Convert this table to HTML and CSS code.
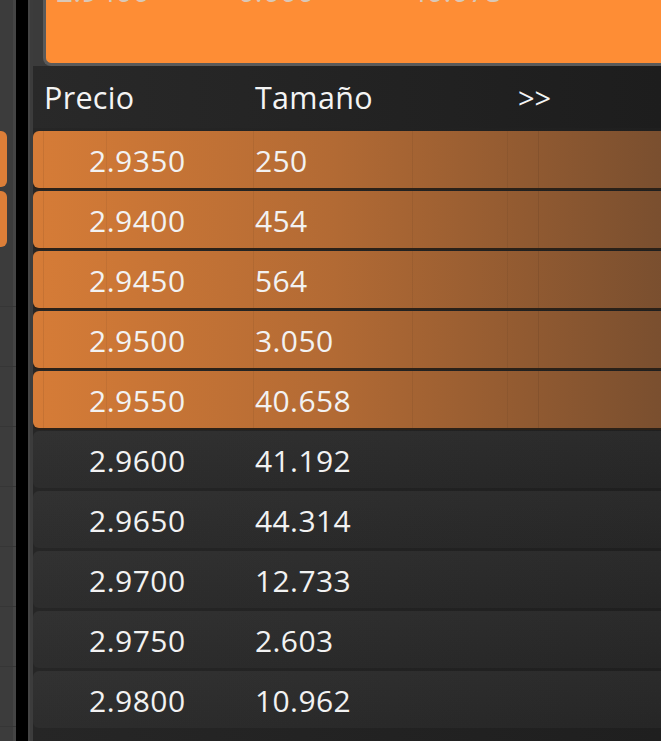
FILE: index.html
```html
<!DOCTYPE html>
<html lang="es">
<head>
<meta charset="utf-8">
<title>Libro de órdenes</title>
<link rel="stylesheet" href="styles.css">
</head>
<body>
<div class="app">
  <div class="side">
    <div class="side-list">
      <div class="side-row hot"></div>
      <div class="side-row hot"></div>
      <div class="side-row"></div>
      <div class="side-row"></div>
      <div class="side-row"></div>
      <div class="side-row"></div>
      <div class="side-row"></div>
      <div class="side-row"></div>
      <div class="side-row"></div>
      <div class="side-row"></div>
    </div>
  </div>
  <div class="rule"></div>
  <div class="main">
    <div class="top">
      <div class="card">
        <div class="card-vals"><span class="cv1">2.9400</span><span class="cv2">0.000</span><span class="cv3">40.075</span></div>
      </div>
    </div>
    <div class="head">
      <span class="h-price">Precio</span>
      <span class="h-size">Tamaño</span>
      <span class="h-more">&gt;&gt;</span>
    </div>
    <div class="book">
      <div class="row ask"><span class="price">2.9350</span><span class="size">250</span></div>
      <div class="row ask"><span class="price">2.9400</span><span class="size">454</span></div>
      <div class="row ask"><span class="price">2.9450</span><span class="size">564</span></div>
      <div class="row ask"><span class="price">2.9500</span><span class="size">3.050</span></div>
      <div class="row ask"><span class="price">2.9550</span><span class="size">40.658</span></div>
      <div class="row"><span class="price">2.9600</span><span class="size">41.192</span></div>
      <div class="row"><span class="price">2.9650</span><span class="size">44.314</span></div>
      <div class="row"><span class="price">2.9700</span><span class="size">12.733</span></div>
      <div class="row"><span class="price">2.9750</span><span class="size">2.603</span></div>
      <div class="row"><span class="price">2.9800</span><span class="size">10.962</span></div>
    </div>
  </div>
</div>
</body>
</html>
```
FILE: styles.css
```css
* { box-sizing: border-box; }
html, body {
  margin: 0;
  padding: 0;
  width: 661px;
  height: 741px;
  overflow: hidden;
  background: #3a3a3a;
  font-family: "Open Sans", "Noto Sans", sans-serif;
  color: #f2f2f2;
}
.app {
  display: flex;
  width: 661px;
  height: 741px;
}
.side {
  width: 16px;
  flex: none;
  background: #3c3c3c;
  border-right: 3px solid #454545;
}
.side-list {
  padding-top: 131px;
  display: flex;
  flex-direction: column;
  gap: 4px;
}
.side-row {
  height: 56px;
  margin-right: -3px;
  border-bottom: 1px solid #363636;
}
.side-row.hot {
  width: 7px;
  margin-right: 0;
  border: none;
  background: #dc7e38;
  border-radius: 0 6px 6px 0;
}
.rule {
  width: 12px;
  flex: none;
  background: #000;
}
.main {
  flex: 1;
  min-width: 0;
  background: #3c3c3c;
  padding-left: 3px;
  border-left: 2px solid #444;
  display: flex;
  flex-direction: column;
}
.top {
  height: 66px;
  padding-left: 10px;
  background: #3b3b3b;
}
.card {
  height: 66px;
  background: #fe8d35;
  border-left: 3px solid #5a5a5a;
  border-bottom: 3px solid #5a5a5a;
  border-bottom-left-radius: 8px;
  overflow: hidden;
}
.card-vals {
  display: flex;
  margin-top: -24px;
  font-size: 30px;
  line-height: 30px;
  color: #d9c8b8;
}
.cv1 { margin-left: 10px; }
.cv2 { margin-left: 88px; }
.cv3 { margin-left: 95px; }
.head {
  height: 62px;
  display: grid;
  grid-template-columns: 211px 263px auto;
  align-items: center;
  padding-left: 11px;
  font-size: 30.5px;
  letter-spacing: 0.3px;
  background: linear-gradient(90deg, #292929, #1d1d1d);
  color: #f4f4f4;
}
.h-more { font-size: 29px; letter-spacing: 0; }
.book {
  flex: 1;
  padding-top: 3px;
  background: linear-gradient(90deg, #262626, #1f1f1f);
  display: flex;
  flex-direction: column;
  gap: 3px;
}
.row {
  height: 57px;
  flex: none;
  display: grid;
  grid-template-columns: 166px auto;
  align-items: center;
  padding-left: 56px;
  padding-top: 2px;
  font-size: 30px;
  border-radius: 6px 0 0 6px;
  background: linear-gradient(180deg, rgba(255,255,255,0.02), rgba(0,0,0,0.03)), linear-gradient(90deg, #2e2e2e, #272727);
}
.row.ask {
  background:
    linear-gradient(90deg, transparent 10px, rgba(0,0,0,0.07) 10px, rgba(0,0,0,0.07) 11px, transparent 11px,
      transparent 73px, rgba(0,0,0,0.06) 73px, rgba(0,0,0,0.06) 74px, transparent 74px,
      transparent 220px, rgba(0,0,0,0.06) 220px, rgba(0,0,0,0.06) 221px, transparent 221px,
      transparent 379px, rgba(0,0,0,0.06) 379px, rgba(0,0,0,0.06) 380px, transparent 380px,
      transparent 474px, rgba(0,0,0,0.06) 474px, rgba(0,0,0,0.06) 475px, transparent 475px,
      transparent 505px, rgba(0,0,0,0.08) 505px, rgba(0,0,0,0.08) 506px, transparent 506px),
    linear-gradient(90deg, #d67c37 0%, #b26a34 48%, #7a4f2f 100%);
  box-shadow: 0 2px 0 #2b2118;
}
.price { letter-spacing: 0.5px; }
.size { letter-spacing: 0.4px; }
```
